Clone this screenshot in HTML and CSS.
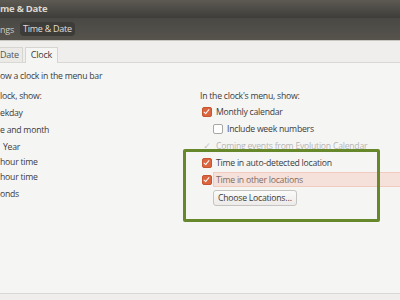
FILE: index.html
```html
<!DOCTYPE html>
<html lang="en">
<head>
  <meta charset="UTF-8" />
  <meta name="viewport" content="width=device-width, initial-scale=1.0"/>
  <title>Time &amp; Date</title>
  <link rel="stylesheet" href="styles.css">
</head>
<body>

<div class="window">
  <div class="titlebar">me &amp; Date</div>

  <div class="toolbar">
    <span class="crumb">ngs</span>
    <span class="crumb current">Time &amp; Date</span>
  </div>

  <div class="tabs">
    <div class="tab">Date</div>
    <div class="tab active">Clock</div>
  </div>

  <div class="page">
    <p class="intro">ow a clock in the menu bar</p>

    <div class="columns">
      <div class="col left">
        <div class="row head">lock, show:</div>
        <div class="row">ekday</div>
        <div class="row">e and month</div>
        <div class="row indent">Year</div>
        <div class="row short">hour time</div>
        <div class="row">hour time</div>
        <div class="row">onds</div>
      </div>

      <div class="col right">
        <div class="row head">In the clock's menu, show:</div>
        <label class="row check">
          <span class="box on"></span>Monthly calendar
        </label>
        <label class="row check sub">
          <span class="box"></span>Include week numbers
        </label>
        <label class="row check disabled">
          <span class="tick">&#10003;</span>Coming events from Evolution Calendar
        </label>
        <label class="row check">
          <span class="box on"></span>Time in auto-detected location
        </label>
        <label class="row check tall">
          <span class="box on"></span>Time in other locations
        </label>
        <div class="row tall sub">
          <button type="button" class="choose">Choose Locations…</button>
        </div>
      </div>
    </div>

    <!-- annotations laid over the screenshot -->
    <div class="highlight"></div>
    <div class="callout"></div>
  </div>

  <div class="footer"></div>
</div>

</body>
</html>
```

FILE: styles.css
```css
body {
  margin: 0;
  overflow: hidden;
  font-family: 'Open Sans', 'DejaVu Sans', sans-serif;
  font-size: 8.7px;
  letter-spacing: -0.25px;
  color: #3c3c3c;
}

.window {
  width: 400px;
  height: 300px;
  display: flex;
  flex-direction: column;
  background: #f5f5f4;
}

.titlebar {
  height: 18px;
  line-height: 17px;
  background: linear-gradient(to bottom, #5d5a53, #3e3d39);
  color: #dcd8cf;
  font-weight: bold;
  font-size: 9.5px;
}

.toolbar {
  height: 22px;
  display: flex;
  align-items: center;
  gap: 6px;
  background: linear-gradient(to bottom, #4a4844, #56534d);
  border-bottom: 1px solid #c9c7c2;
}

.crumb {
  color: #cfcac0;
  font-size: 9px;
}

.crumb.current {
  background: #3d3c38;
  color: #e2ded6;
  padding: 0 3px;
  line-height: 14px;
  border-radius: 4px;
}

.tabs {
  height: 21px;
  display: flex;
  align-items: flex-end;
  gap: 2px;
  background: #efeeec;
  border-bottom: 1px solid #d9d8d5;
}

.tab {
  height: 14px;
  line-height: 14px;
  padding: 0 3px 0 0;
  background: #ebeae7;
  border: 1px solid #d6d5d1;
  border-bottom: none;
  border-left: none;
  color: #555;
  font-size: 9px;
}

.tab.active {
  height: 15px;
  padding: 0 5px;
  border-left: 1px solid #d6d5d1;
  background: #f5f5f4;
  color: #3c3c3c;
  margin-bottom: -1px;
}

.page {
  position: relative;
  flex: 1;
  padding-top: 6px;
  border-bottom: 1px solid #d8d8d6;
}

.intro {
  margin: 0;
  line-height: 14px;
}

.columns {
  display: flex;
  margin-top: 5px;
}

.col.left {
  width: 200px;
}

.row {
  height: 17px;
  display: flex;
  align-items: center;
}

.row.head {
  height: 16px;
}

.col.right .row.head {
  height: 15px;
}

.row.indent {
  padding-left: 3px;
}

.row.short {
  height: 13px;
}

.row.tall {
  height: 18px;
}

.check {
  padding-left: 2px;
  gap: 4px;
}

.check.sub {
  padding-left: 17px;
}

.row.sub {
  padding-left: 13px;
}

.box {
  width: 8px;
  height: 8px;
  border: 1px solid #a9a7a3;
  border-radius: 2px;
  background: #fff;
  position: relative;
}

.box.on {
  background: #db6540;
  border-color: #c7552f;
}

.box.on::after {
  content: "";
  position: absolute;
  left: 2px;
  top: 0;
  width: 2px;
  height: 5px;
  border: solid #fff;
  border-width: 0 1.5px 1.5px 0;
  transform: rotate(40deg);
}

.tick {
  width: 10px;
  text-align: center;
  color: #c3c2bf;
  font-size: 9px;
}

.disabled {
  color: #b8b7b4;
}

.choose {
  font-family: inherit;
  font-size: 8.7px;
  letter-spacing: -0.25px;
  color: #3c3c3c;
  height: 16px;
  padding: 0 4px;
  background: linear-gradient(to bottom, #fbfbfa, #ecebe9);
  border: 1px solid #c6c4c0;
  border-radius: 3px;
}

.highlight {
  position: absolute;
  left: 213px;
  right: 0;
  top: 109px;
  height: 13px;
  background: rgba(246, 190, 170, 0.35);
  border: 1px solid rgba(236, 170, 150, 0.4);
  border-right: none;
}

.callout {
  position: absolute;
  left: 183px;
  top: 86px;
  width: 191px;
  height: 67px;
  border: 3px solid #67882a;
  border-radius: 2px;
}

.footer {
  height: 6px;
  background: #efeeec;
}
```
